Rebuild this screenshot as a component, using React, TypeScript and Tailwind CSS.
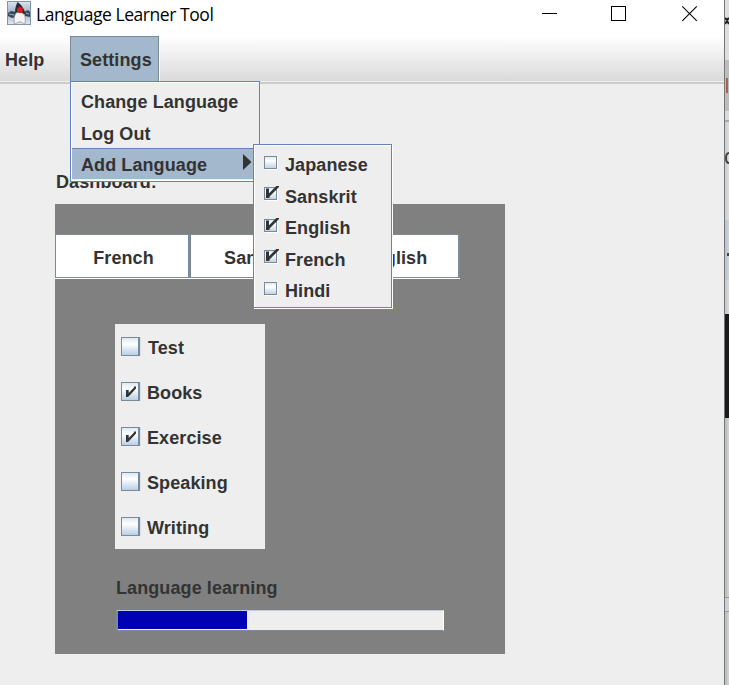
import type { ReactNode } from "react";

const MENU_LANGUAGES = [
  { name: "Japanese", on: false, row: "h-[32px] pt-[5px]", box: "mt-[1px]" },
  { name: "Sanskrit", on: true, row: "h-[31px] pt-[5px]", box: "mt-0" },
  { name: "English", on: true, row: "h-[32px] pt-[5px]", box: "mt-[1px]" },
  { name: "French", on: true, row: "h-[31px] pt-[5px]", box: "mt-0" },
  { name: "Hindi", on: false, row: "h-[31px] pt-[5px]", box: "mt-[1px]" },
];

const TABS = [
  { name: "French", pad: "pl-[3px]" },
  { name: "Sanskrit", pad: "pl-[6px]" },
  { name: "English", pad: "pl-[5px]" },
];

const TASKS = [
  { name: "Test", on: false, gap: "ml-[8px]" },
  { name: "Books", on: true, gap: "ml-[7px]" },
  { name: "Exercise", on: true, gap: "ml-[7px]" },
  { name: "Speaking", on: false, gap: "ml-[7px]" },
  { name: "Writing", on: false, gap: "ml-[7px]" },
];

function DukeIcon() {
  return (
    <svg width="24" height="24" viewBox="0 0 24 24" className="mt-px block">
      <defs>
        <linearGradient id="tile" x1="0" y1="0" x2="0" y2="1">
          <stop offset="0" stopColor="#dbe6ef" />
          <stop offset="0.5" stopColor="#9fb2c4" />
          <stop offset="1" stopColor="#e4e9ee" />
        </linearGradient>
      </defs>
      <rect x="0.5" y="0.5" width="23" height="23" fill="url(#tile)" stroke="#8495a8" />
      <path d="M1 12l3-2 5 1v5l-4 1-4-2zM17 11l4-2 2 2v5l-5-1z" fill="#34485a" />
      <path d="M2 13l5 1M19 12l3 1" stroke="#8fb4d0" strokeWidth="1" />
      <path d="M10.5 1C9 4 8 7 8 12l3 1 7 0c0-4-3-9-7.500-12z" fill="#2a2c2f" />
      <path d="M9 12c-2 3-2.500 7-1.500 11 2 0 2.500-2 5.500-2 2.500 0 3 2.500 5 2 .5-4 .5-6-.5-9-2-3-6-3.500-8.500-2z" fill="#f3f3f3" stroke="#8a8a8a" strokeWidth="0.7" />
      <circle cx="13" cy="9" r="2.900" fill="#e01820" />
    </svg>
  );
}

function TitleBar() {
  return (
    <div className="flex h-9 items-start bg-white pl-[7px] text-black">
      <DukeIcon />
      <span className="ml-[5px] mt-[2px] grow whitespace-nowrap font-['Open_Sans','Noto_Sans',sans-serif] text-[17.5px] leading-6 tracking-[-0.44px]">
        Language Learner Tool
      </span>
      <svg width="156" height="28" viewBox="0 0 156 28" fill="none" stroke="#000" className="mr-[26px] block">
        <path d="M0 13.5h15M69.5 6.5h14v14h-14z" shapeRendering="crispEdges" />
        <path d="M140.3 6.3l14.5 14.5M154.8 6.3l-14.5 14.5" strokeWidth="1.1" />
      </svg>
    </div>
  );
}

function MenuCheck({ on }: { on: boolean }) {
  return (
    <svg width="16" height="15" viewBox="0 0 16 15" className="block shrink-0">
      <defs>
        <linearGradient id="menuBox" x1="0" y1="0" x2="0" y2="1">
          <stop offset="0" stopColor="#dce7f2" />
          <stop offset="0.35" stopColor="#ffffff" />
          <stop offset="1" stopColor="#bdd1e6" />
        </linearGradient>
      </defs>
      <path d="M14 2v13H1v-1h12V2z" fill="#fff" />
      <rect x="0.5" y="1.5" width="12" height="12" fill="url(#menuBox)" stroke="#7a8a99" />
      {on && <path d="M2 2.500h3v4.700L12.300 0H15v1L5.500 10.500V12H2z" fill="#333" />}
    </svg>
  );
}

function TaskCheck({ on }: { on: boolean }) {
  return (
    <span className="flex h-[19px] w-[19px] shrink-0 border border-r-2 border-[#7a8a99] bg-linear-to-b from-[#dde8f3] via-white via-35% to-[#b8cfe5] shadow-[1px_0_0_#d8e2ec]">
      {on && (
        <svg width="16" height="17" viewBox="0 0 16 17" className="block">
          <path d="M4 7h2.700v3L12 4.500V3.500h2v2L8 12l-2 2H4z" fill="#333" />
        </svg>
      )}
    </span>
  );
}

function MenuRow({ children }: { children: ReactNode }) {
  return <div className="flex h-8 items-center pl-[9px] pt-[3px]">{children}</div>;
}

function SettingsMenu() {
  return (
    <div className="absolute left-[70px] top-[81px] h-[101px] w-[190px] border border-[#6382bf] bg-[#eee] shadow-[inset_1px_1px_0_#fff]">
      <div className="flex h-[34px] items-center pl-[10px] pt-[6px]">Change Language</div>
      <div className="pl-px">
        <MenuRow>Log Out</MenuRow>
      </div>
      <div className="ml-px flex h-[31px] items-center justify-between border-t border-[#6382bf] bg-[#a3b8cc] pl-[9px] pr-[8px] pt-px">
        Add Language
        <svg width="8" height="16" viewBox="0 0 8 16" className="mb-[5px] block">
          <path d="M0 0l8 7.5v1L0 16z" fill="#333" />
        </svg>
      </div>
      <div className="mt-px h-px bg-white" />
    </div>
  );
}

function LanguageMenu() {
  return (
    <div className="absolute left-[253px] top-[144px] flex h-[164px] w-[139px] flex-col border border-[#6382bf] bg-[#eee] pt-[4px] shadow-[inset_1px_1px_0_#fff,1px_1px_0_#fff]">
      {MENU_LANGUAGES.map((l) => (
        <div key={l.name} className={`flex items-start pl-[10px] ${l.row}`}>
          <div className={l.box}>
            <MenuCheck on={l.on} />
          </div>
          <span className="ml-[5px]">{l.name}</span>
        </div>
      ))}
    </div>
  );
}

function Dashboard() {
  return (
    <div className="mx-[55px] h-[450px] w-[450px] bg-[#808080] pt-[30px]">
      <div className="flex w-[405px] border-b border-white">
        {TABS.map((t) => (
          <div
            key={t.name}
            className={`flex h-11 w-[135px] items-center justify-center border border-r-2 border-[#7a8a99] bg-white pt-[4px] ${t.pad}`}
          >
            {t.name}
          </div>
        ))}
      </div>
      <div className="ml-[60px] mt-[45px] h-[225px] w-[150px] bg-[#eee]">
        {TASKS.map((t) => (
          <div key={t.name} className="flex h-[45px] items-center pl-[6px]">
            <TaskCheck on={t.on} />
            <span className={`pt-[2px] ${t.gap}`}>{t.name}</span>
          </div>
        ))}
      </div>
      <div className="ml-[61px] mt-[28px] leading-[22px]">Language learning</div>
      <div className="ml-[61px] mt-[11px] flex h-[21px] w-[328px] border border-l-2 border-[#7a8a99] border-r-white border-t-[#b8cfe5] bg-[#eee]">
        <div className="h-[18px] w-[129px] bg-[#0000b4]" />
      </div>
    </div>
  );
}

function BackgroundEdge() {
  return (
    <div className="flex w-[5px] flex-col overflow-hidden border-l border-[#777]">
      <div className="h-[60px] bg-[#dedede]">
        <svg width="4" height="30" viewBox="0 0 4 30" className="block">
          <path d="M0 18l2 2 2-2M0 24l2-3 2 3" fill="none" stroke="#222" strokeWidth="2" />
        </svg>
      </div>
      <div className="h-[51px] bg-[#bdbdbd] pl-px pt-[18px]">
        <div className="h-[15px] w-[2px] border-l border-[#a05848] bg-[#6080a8]" />
      </div>
      <div className="h-[9px] bg-[#d8dadb]" />
      <div className="h-[2px] bg-[#aaa]" />
      <div className="h-[98px] bg-linear-to-r from-[#cccfd1] to-[#dadcde] pt-[30px]">
        <svg width="4" height="12" viewBox="0 0 4 12" className="block">
          <path d="M4 1C0 1 0 11 4 11" fill="none" stroke="#444" strokeWidth="2" />
        </svg>
      </div>
      <div className="h-[60px] bg-linear-to-r from-[#b9c1ca] to-[#cbd3dc] pl-[2px] pt-[33px]">
        <div className="h-[3px] w-[2px] bg-[#444]" />
      </div>
      <div className="h-[34px] bg-linear-to-r from-[#c4c8ca] to-[#d8dcde]" />
      <div className="-ml-px h-[104px] bg-[#171b1c]" />
      <div className="h-[179px] bg-linear-to-r from-[#b9bbba] to-[#d3d5d4]" />
      <div className="h-[15px] border-y border-[#999] bg-[#cdd0d4]" />
      <div className="grow bg-linear-to-r from-[#b9bbba] to-[#d3d5d4]" />
    </div>
  );
}

export default function App() {
  return (
    <div className="relative flex h-[685px] w-[729px] overflow-hidden bg-[#eee] font-['Liberation_Sans',Arial,sans-serif] text-[18px] font-bold leading-[22px] tracking-[0.09px] text-[#333]">
      <div className="flex w-[724px] flex-col">
        <div className="font-normal">
          <TitleBar />
        </div>
        <div className="border-b-2 border-[#ccc]">
          <div className="flex h-[46px] border-b border-[#eee] bg-linear-to-b from-white to-[#dadada]">
            <div className="flex w-[70px] items-center pl-[5px] pt-[3px]">Help</div>
            <div className="flex w-[89px] items-center border border-b-0 border-[#7a8a99] bg-[#a3b8cc] pl-[9px] pt-[2px] shadow-[1px_0_0_#fff]">
              Settings
            </div>
          </div>
        </div>
        <div className="mb-[11px] ml-[56px] mt-[87px] h-[22px]">Dashboard:</div>
        <Dashboard />
      </div>
      <BackgroundEdge />
      <SettingsMenu />
      <LanguageMenu />
    </div>
  );
}
